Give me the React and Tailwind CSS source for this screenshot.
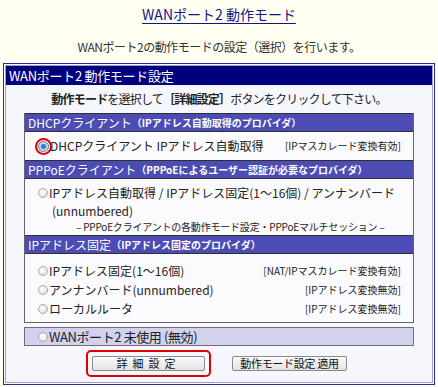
import React from "react";

const font = { fontFamily: '"Noto Sans CJK JP", "Noto Sans", sans-serif' };

function Radio({ on }) {
  if (on) {
    return (
      <span className="relative inline-flex w-[11px] h-[11px] shrink-0 items-center justify-center">
        <span className="absolute -inset-[3px] rounded-full border-2 border-[#e00000]" />
        <span className="w-[11px] h-[11px] rounded-full border border-[#5f7890] bg-[radial-gradient(circle,#2a7cc4_0,#2a7cc4_30%,#bcd3e6_48%,#e8eef4_100%)]" />
      </span>
    );
  }
  return (
    <span className="inline-block w-[10px] h-[10px] shrink-0 rounded-full border border-[#a9a9a9] bg-[radial-gradient(circle_at_40%_40%,#ffffff,#d9d9d9)]" />
  );
}

function SectionHead({ title, note }) {
  return (
    <div className="h-[19px] flex items-center pl-[3px] bg-[#4c4cb4] text-white border-y border-[#303030] whitespace-nowrap">
      <span className="text-[12px] leading-none">{title}</span>
      <span className="text-[10px] font-bold leading-none">（{note}）</span>
    </div>
  );
}

function Row({ label, tag }) {
  return (
    <div className="h-[19px] flex items-center pl-[13px] pr-[12px] whitespace-nowrap leading-none">
      <Radio />
      <span className="ml-px text-[12px] text-[#222]">{label}</span>
      <span className="ml-auto text-[10px] text-[#222]">{tag}</span>
    </div>
  );
}

export default function App() {
  return (
    <div className="w-[438px] h-[387px] overflow-hidden bg-[#fffff2] leading-none" style={font}>
      <div className="h-[28px] flex items-center justify-center">
        <span className="text-[14px] leading-none text-[#14148a] underline underline-offset-[3px]">WANポート2 動作モード</span>
      </div>
      <div className="mt-[10px] h-[18px] flex items-center justify-center text-[12px] tracking-[-0.5px] text-[#333]">
        WANポート2の動作モードの設定（選択）を行います。
      </div>

      <div className="mx-[3px] mt-[7px] border border-[#2a2a9a] p-px bg-white">
        <div className="border border-[#9c9cd4] bg-[#f5f7fd]">
          <div className="h-[19px] flex items-center pl-[3px] bg-[#00007e] text-white text-[13px] tracking-[-0.3px]">
            WANポート2 動作モード設定
          </div>

          <div className="px-[18px] pb-[5px]">
            <div className="h-[28px] flex items-center justify-center text-[12px] tracking-[-0.8px] text-[#222] whitespace-nowrap">
              <span className="font-bold">動作モード</span>を選択して<span className="font-bold">［詳細設定］</span>ボタンをクリックして下さい。
            </div>

            <div className="border-x border-b border-[#666] bg-[#fbfbfd]">
              <SectionHead title="DHCPクライアント" note="IPアドレス自動取得のプロバイダ" />
              <div className="h-[28px] flex items-center pl-[13px] pr-[12px] whitespace-nowrap">
                <Radio on />
                <span className="ml-px text-[12px] text-[#222]">DHCPクライアント IPアドレス自動取得</span>
                <span className="ml-auto text-[10px] text-[#222]">[IPマスカレード変換有効]</span>
              </div>

              <SectionHead title="PPPoEクライアント" note="PPPoEによるユーザー認証が必要なプロバイダ" />
              <div className="h-[56px] pt-[5px] whitespace-nowrap">
                <div className="h-[18px] flex items-center pl-[13px]">
                  <Radio />
                  <span className="ml-px text-[12px] text-[#222]">IPアドレス自動取得 / IPアドレス固定(1〜16個) / アンナンバード</span>
                </div>
                <div className="h-[17px] flex items-center pl-[27px] text-[12px] text-[#222]">(unnumbered)</div>
                <div className="h-[16px] flex items-center pl-[51px] text-[10px] tracking-[-0.2px] text-[#222]">
                  – PPPoEクライアントの各動作モード設定・PPPoEマルチセッション –
                </div>
              </div>

              <SectionHead title="IPアドレス固定" note="IPアドレス固定のプロバイダ" />
              <div className="pt-[7px] pb-[4px]">
                <Row label="IPアドレス固定(1〜16個)" tag="[NAT/IPマスカレード変換有効]" />
                <Row label="アンナンバード(unnumbered)" tag="[IPアドレス変換無効]" />
                <Row label="ローカルルータ" tag="[IPアドレス変換無効]" />
              </div>
            </div>

            <div className="mt-[4px] h-[19px] flex items-center pl-[13px] border border-[#707070] bg-[#d2d2ee] whitespace-nowrap">
              <Radio />
              <span className="ml-px text-[13px] tracking-[-0.4px] text-[#222]">WANポート2 未使用 (無効)</span>
            </div>

            <div className="mt-[4px] pl-[62px] flex items-center gap-[21px]">
              <div className="rounded-[5px] border-2 border-[#e00000] px-[4px] py-[4px]">
                <button className="w-[113px] h-[15px] flex items-center justify-center rounded-[2px] border border-[#8a8a8a] bg-[linear-gradient(#fbfbfb,#e2e2e2)] text-[11px] leading-none tracking-[5px] text-[#111]">
                  詳細設定
                </button>
              </div>
              <button className="w-[115px] h-[15px] flex items-center justify-center rounded-[2px] border border-[#8a8a8a] bg-[linear-gradient(#fbfbfb,#e2e2e2)] text-[11px] leading-none tracking-[-0.3px] text-[#111]">
                動作モード設定 適用
              </button>
            </div>
          </div>
        </div>
      </div>
    </div>
  );
}
